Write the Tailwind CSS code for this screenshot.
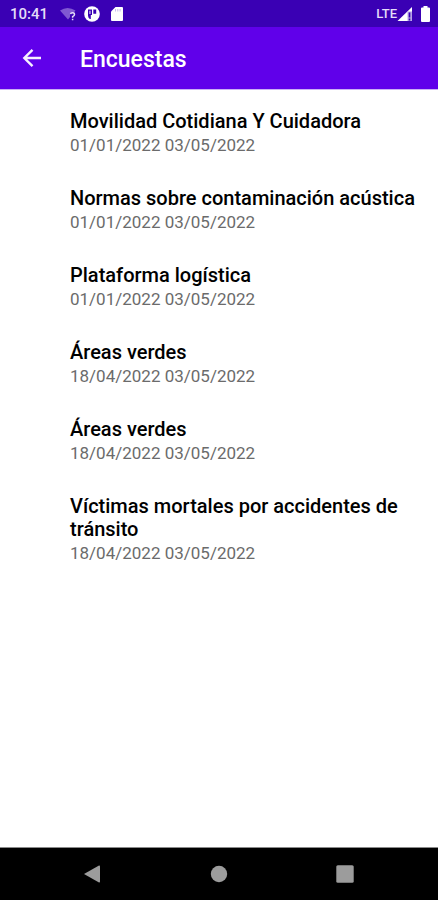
<!DOCTYPE html>
<html lang="es">
<head>
<meta charset="utf-8">
<meta name="viewport" content="width=device-width, initial-scale=1">
<title>Encuestas</title>
<script src="https://cdn.jsdelivr.net/npm/@tailwindcss/browser@4"></script>
</head>
<body class="flex min-h-screen flex-col bg-white font-['Roboto',sans-serif] text-black">
  <div class="flex h-[27px] items-center justify-between bg-[#3a00b4] pl-[10px] pr-2 text-[#e4dcf8]">
    <div class="flex items-center">
      <span class="text-[15px] leading-6 font-medium">10:41</span>
      <svg class="ml-3 h-4 w-4" viewBox="0 0 16 16" aria-hidden="true">
        <path d="M0 4.500Q7.500-.5 15.500 4.500L13.500 7H10V11L8 13.500Z" fill="#8058d2"/>
        <path d="M10.500 8.200Q10.800 6.800 12.500 6.800Q14.500 6.800 14.500 8.500Q14.500 9.600 12.600 10.600V11.800M12.600 12.800V14.200" fill="none" stroke="#e4dcf8" stroke-width="1.500"/>
      </svg>
      <svg class="ml-2 h-4 w-4" viewBox="0 0 16 16" aria-hidden="true">
        <circle cx="8" cy="8" r="7.800" fill="#fff"/>
        <path d="M4 3.500H8V9H6.800V13H5.800Q4 11.500 4 9.500ZM9.300 3.500H12.200V7.800H9.300Z" fill="#3a00b4"/>
        <path d="M5.300 4.800H6.600V8H5.300Z" fill="#cbbcf0"/>
      </svg>
      <svg class="ml-[11px] h-4 w-3" viewBox="0 0 12 16" aria-hidden="true">
        <path d="M4.500 1H11Q12 1 12 2V14Q12 15 11 15H1Q0 15 0 14V5.500Z" fill="#fff"/>
        <path d="M4.500 3V5.500M6.800 3V5.500M9.100 3V5.500" stroke="#c9b9ee" stroke-width="1"/>
      </svg>
    </div>
    <div class="flex items-center">
      <span class="text-[13px] leading-6 font-medium">LTE</span>
      <svg class="h-4 w-4" viewBox="0 0 16 16" aria-hidden="true">
        <path d="M.500 15L15 1V15Z" fill="#fff"/>
        <path d="M10.500 5.500H15V15H10.500Z" fill="#b7a3e6"/>
        <path d="M12.500 6.500V11.500M12.500 12.500V14.500" stroke="#3a00b4" stroke-width="1.600"/>
      </svg>
      <svg class="ml-2 h-4 w-[9px]" viewBox="0 0 9 16" aria-hidden="true">
        <path d="M2.500 0H6.500V1.500H8Q9 1.500 9 2.500V15Q9 16 8 16H1Q0 16 0 15V2.500Q0 1.500 1 1.500H2.500Z" fill="#fff"/>
      </svg>
    </div>
  </div>
  <header class="flex h-[62px] items-center bg-[#6000ea] pl-5 text-white">
    <button type="button" aria-label="Volver" class="flex h-6 w-6 items-center justify-center">
      <svg class="h-6 w-6" viewBox="0 0 24 24" fill="none" stroke="#f6efff" stroke-width="2.400" aria-hidden="true">
        <path d="M21 12H4.800M12.500 3.800L4.300 12L12.500 20.200"/>
      </svg>
    </button>
    <h1 class="pl-9 pt-1 text-[23px] leading-7 font-medium">Encuestas</h1>
  </header>
  <main class="flex-1 border-t border-[#cbb0f5] pl-[70px] pr-3">
    <ul class="flex flex-col gap-[29px] pt-5">
      <li><h2 class="text-xl leading-[23px] font-medium">Movilidad Cotidiana Y Cuidadora</h2><p class="text-[17px] leading-[25px] text-[#6b6b6b]">01/01/2022 03/05/2022</p></li>
      <li><h2 class="text-xl leading-[23px] font-medium">Normas sobre contaminación acústica</h2><p class="text-[17px] leading-[25px] text-[#6b6b6b]">01/01/2022 03/05/2022</p></li>
      <li><h2 class="text-xl leading-[23px] font-medium">Plataforma logística</h2><p class="text-[17px] leading-[25px] text-[#6b6b6b]">01/01/2022 03/05/2022</p></li>
      <li><h2 class="text-xl leading-[23px] font-medium">Áreas verdes</h2><p class="text-[17px] leading-[25px] text-[#6b6b6b]">18/04/2022 03/05/2022</p></li>
      <li><h2 class="text-xl leading-[23px] font-medium">Áreas verdes</h2><p class="text-[17px] leading-[25px] text-[#6b6b6b]">18/04/2022 03/05/2022</p></li>
      <li><h2 class="text-xl leading-[23px] font-medium">Víctimas mortales por accidentes de tránsito</h2><p class="text-[17px] leading-[25px] text-[#6b6b6b]">18/04/2022 03/05/2022</p></li>
    </ul>
  </main>
  <nav aria-label="Sistema" class="flex h-[53px] items-center justify-between border-t border-[#8a8a8a] bg-black pr-[84px] pl-[83px]">
    <button type="button" aria-label="Atrás"><svg class="h-[18px] w-[18px]" viewBox="0 0 18 18" aria-hidden="true"><path d="M1 9L16 .500Q17 .300 17 1.500V16.500Q17 17.700 16 17.500Z" fill="#9c9c9c"/></svg></button>
    <button type="button" aria-label="Inicio"><svg class="h-[18px] w-[18px]" viewBox="0 0 18 18" aria-hidden="true"><circle cx="9" cy="9" r="8.200" fill="#9c9c9c"/></svg></button>
    <button type="button" aria-label="Recientes"><svg class="h-[18px] w-[18px]" viewBox="0 0 18 18" aria-hidden="true"><rect x=".3" y=".3" width="17.400" height="17.400" rx="1.500" fill="#9c9c9c"/></svg></button>
  </nav>
</body>
</html>
